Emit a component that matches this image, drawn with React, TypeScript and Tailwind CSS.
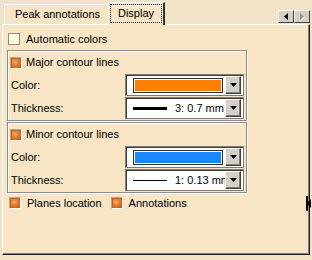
import React from "react";

function OrangeCheck() {
  return (
    <div className="w-[12px] h-[12px] shrink-0 border border-t-[#c9a27a] border-l-[#c9a27a] border-b-white border-r-white">
      <div className="w-full h-full bg-[radial-gradient(circle_at_40%_40%,#f2a860,#d86e24_60%,#b9561a)] shadow-[inset_1px_1px_0_#c0601c]" />
    </div>
  );
}

function DropButton() {
  return (
    <div className="w-[16px] h-[18px] shrink-0 bg-[#d4d0c8] border border-t-white border-l-white border-b-[#404040] border-r-[#404040] shadow-[inset_-1px_-1px_0_#808080] flex items-center justify-center">
      <svg width="7" height="4" viewBox="0 0 7 4">
        <polygon points="0,0 7,0 3.5,4" fill="#000" />
      </svg>
    </div>
  );
}

function Combo({ children }: { children: React.ReactNode }) {
  return (
    <div className="w-[119px] h-[22px] bg-white border border-[#7c7c7c] shadow-[inset_1px_1px_0_#404040] flex items-center pl-[2px] pr-[2px]">
      <div className="flex-1 h-full flex items-center overflow-hidden">{children}</div>
      <DropButton />
    </div>
  );
}

function ContourGroup({
  title,
  color,
  lineH,
  thickness,
}: {
  title: string;
  color: string;
  lineH: string;
  thickness: string;
}) {
  return (
    <div className="w-[240px] border border-[#8c8c8c] shadow-[inset_1px_1px_0_#fff,1px_1px_0_#fff] flex flex-col pb-[1px]">
      <div className="h-[23px] flex items-center pl-[2px]">
        <OrangeCheck />
        <span className="ml-[4px]">{title}</span>
      </div>
      <div className="h-[22px] flex items-center pl-[3px]">
        <span className="w-[114px]">Color:</span>
        <Combo>
          <div className="ml-[5px] w-[90px] h-[15px] p-[1px] border border-[#303030] bg-white">
            <div className="w-full h-full" style={{ background: color }} />
          </div>
        </Combo>
      </div>
      <div className="h-[22px] flex items-center pl-[3px] mt-[1px]">
        <span className="w-[114px]">Thickness:</span>
        <Combo>
          <div className={`ml-[5px] w-[34px] shrink-0 bg-black ${lineH}`} />
          <span className="ml-[8px] whitespace-nowrap">{thickness}</span>
        </Combo>
      </div>
    </div>
  );
}

export default function App() {
  return (
    <div className="relative w-[312px] h-[260px] bg-[#f2e3c8] text-[11px] text-black font-['Liberation_Sans',Arial,sans-serif] overflow-hidden">
      {/* tab strip */}
      <div className="h-[24px] flex items-end pl-[4px]">
        <div className="w-[104px] h-[20px] border-t border-l border-white rounded-tl-[2px] bg-[#f5e4c6] flex items-center pl-[10px]">
          Peak annotations
        </div>
        <div className="relative z-10 -mb-[1px] w-[57px] h-[23px] border-t border-l border-white border-r-2 border-r-[#303030] bg-[#f7e5c5] p-[1px]">
          <div className="w-full h-[19px] border border-dotted border-[#202020] flex items-center justify-center">
            Display
          </div>
        </div>
        <div className="ml-auto mr-[2px] mb-[1px] flex">
          <div className="w-[16px] h-[13px] bg-[#d4d0c8] border border-t-white border-l-white border-b-[#404040] border-r-[#404040] flex items-center justify-center">
            <svg width="4" height="7" viewBox="0 0 4 7">
              <polygon points="4,0 4,7 0,3.5" fill="#000" />
            </svg>
          </div>
          <div className="w-[16px] h-[13px] bg-[#d4d0c8] border border-t-white border-l-white border-b-[#404040] border-r-[#404040] flex items-center justify-center">
            <svg width="5" height="8" viewBox="0 0 5 8">
              <polygon points="1,1 1,8 5,4.5" fill="#fff" />
              <polygon points="0,0 0,7 4,3.5" fill="#9a968e" />
            </svg>
          </div>
        </div>
      </div>

      {/* panel */}
      <div className="ml-[2px] w-[308px] h-[231px] bg-[#f7e5c5] border-t border-l border-white border-r border-b border-r-[#202020] border-b-[#202020] shadow-[inset_-1px_-1px_0_#808080] pt-[7px] pl-[4px] flex flex-col">
        <div className="h-[14px] flex items-center">
          <div className="ml-[1px] w-[12px] h-[12px] border border-[#8a8a8a] bg-[#fffde2]" />
          <span className="ml-[6px]">Automatic colors</span>
        </div>

        <div className="mt-[4px]">
          <ContourGroup
            title="Major contour lines"
            color="#ff8000"
            lineH="h-[3px]"
            thickness="3: 0.7 mm"
          />
        </div>
        <div className="mt-[1px]">
          <ContourGroup
            title="Minor contour lines"
            color="#1a86ff"
            lineH="h-[1px]"
            thickness="1: 0.13 mm"
          />
        </div>

        <div className="mt-[3px] h-[14px] flex items-center pl-[2px]">
          <OrangeCheck />
          <span className="ml-[6px]">Planes location</span>
          <div className="ml-[9px]">
            <OrangeCheck />
          </div>
          <span className="ml-[6px]">Annotations</span>
        </div>
      </div>

      {/* mouse cursor sitting on the right edge */}
      <svg className="absolute left-[305px] top-[196px]" width="7" height="15" viewBox="0 0 7 15">
        <polygon points="1,0 1,15 3,15 3,9 6,12 6,3 3,6 3,0" fill="#000" />
      </svg>
    </div>
  );
}
